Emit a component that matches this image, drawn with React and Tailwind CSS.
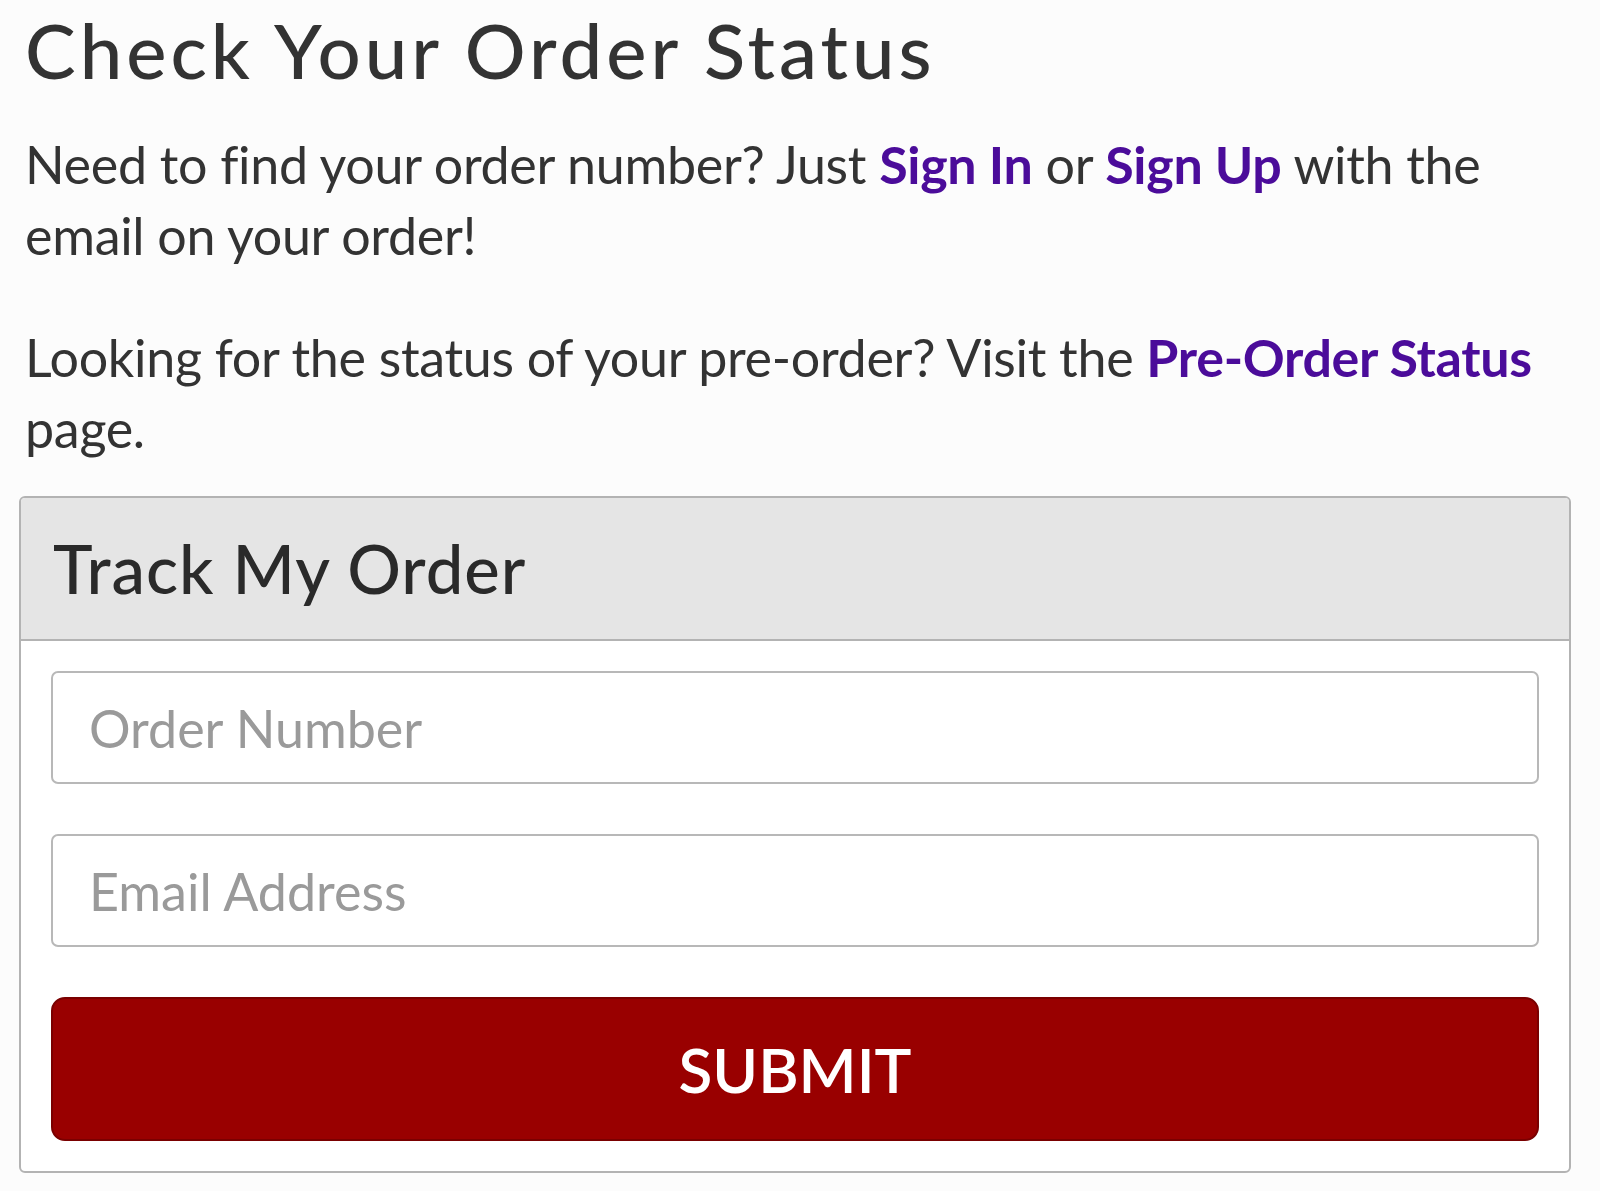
import React from "react";

export default function App() {
  return (
    <div className="min-h-[1191px] bg-[#fcfcfc] px-[25px] pt-[6px] font-['Lato','Open_Sans',sans-serif] text-[#333]">
      <h1 className="text-[76px] leading-[88px] font-medium tracking-[4px]">
        Check Your Order Status
      </h1>

      <p className="mt-[35px] text-[52px] leading-[71px] tracking-[-0.3px]">
        Need to find your order number? Just{" "}
        <a href="#" className="font-bold text-[#4b0c9a]">Sign In</a> or{" "}
        <a href="#" className="font-bold text-[#4b0c9a]">Sign Up</a> with the
        email on your order!
      </p>

      <p className="mt-[51px] text-[52px] leading-[71px] tracking-[-0.3px]">
        Looking for the status of your pre-order? Visit the{" "}
        <a href="#" className="font-bold text-[#4b0c9a]">Pre-Order Status</a>{" "}
        page.
      </p>

      <div className="mt-[32px] mr-[4px] -ml-[6px] rounded-[6px] border-2 border-[#b3b3b3] bg-white overflow-hidden">
        <div className="bg-[#e5e5e5] border-b-2 border-[#b3b3b3] h-[143px] flex items-center px-[32px]">
          <h2 className="text-[67px] font-medium leading-none tracking-[1px] text-[#2a2a2a]">
            Track My Order
          </h2>
        </div>
        <form className="p-[30px] flex flex-col gap-[50px]">
          <input
            type="text"
            placeholder="Order Number"
            className="h-[113px] w-full rounded-[7px] border-2 border-[#b8b8b8] bg-white px-[36px] text-[52px] placeholder:text-[#9a9a9a] focus:outline-none"
          />
          <input
            type="email"
            placeholder="Email Address"
            className="h-[113px] w-full rounded-[7px] border-2 border-[#b8b8b8] bg-white px-[36px] text-[52px] placeholder:text-[#9a9a9a] focus:outline-none"
          />
          <button
            type="submit"
            className="h-[144px] w-full rounded-[14px] border-2 border-[#7a0000] bg-[#990000] text-[62px] font-semibold text-white"
          >
            SUBMIT
          </button>
        </form>
      </div>
    </div>
  );
}
